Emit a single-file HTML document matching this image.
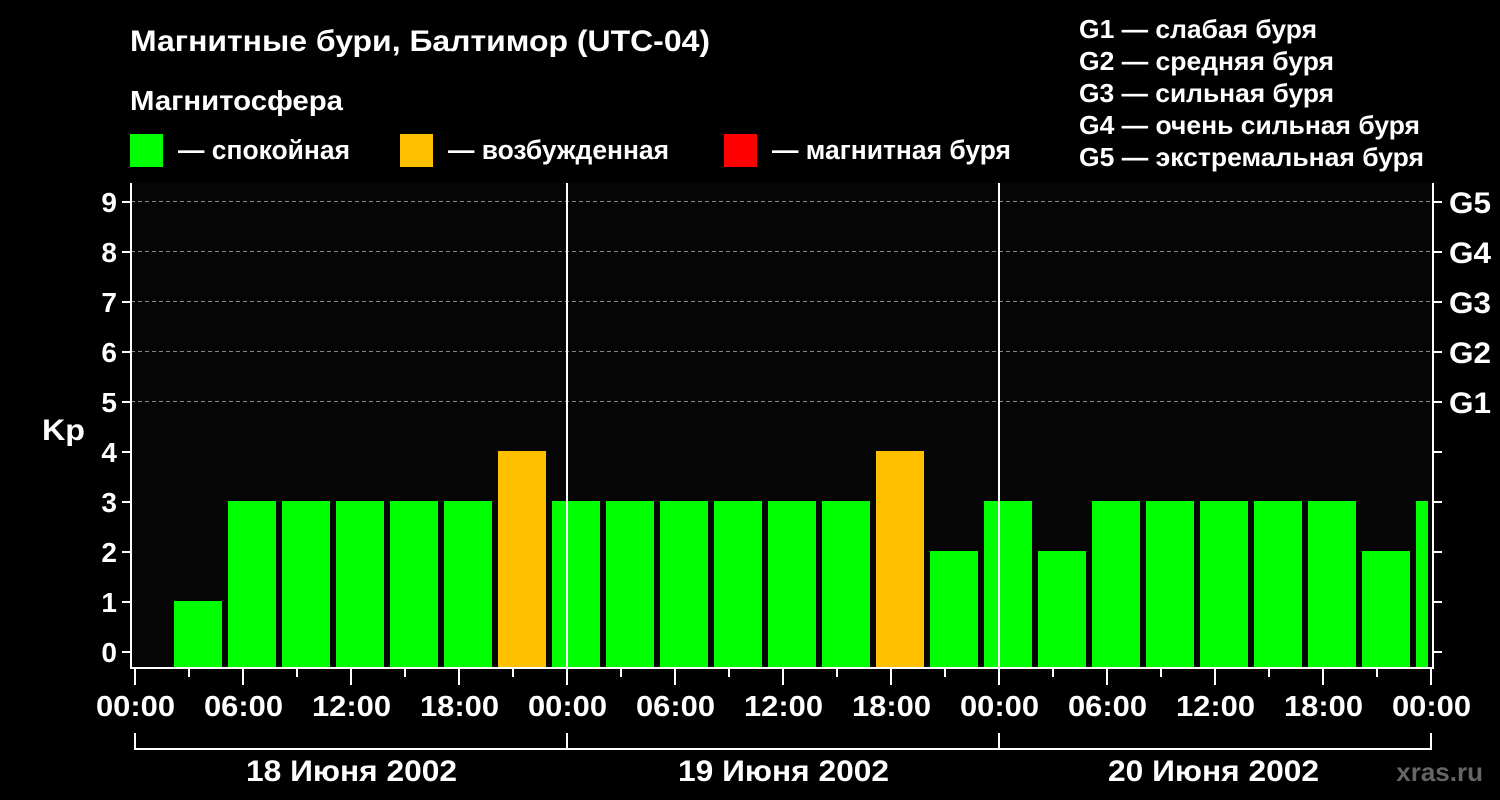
<!DOCTYPE html>
<html><head><meta charset="utf-8"><style>
html,body{margin:0;padding:0;background:#000;width:1500px;height:800px;overflow:hidden}
svg{display:block}
text{font-family:"Liberation Sans",sans-serif;font-weight:bold;fill:#fff}
</style></head><body>
<svg width="1500" height="800" xmlns="http://www.w3.org/2000/svg">
<rect width="1500" height="800" fill="#000"/>
<text x="130" y="51" font-size="30" textLength="580" lengthAdjust="spacingAndGlyphs">Магнитные бури, Балтимор (UTC-04)</text>
<text x="130" y="110" font-size="28" textLength="213" lengthAdjust="spacingAndGlyphs">Магнитосфера</text>
<rect x="130" y="134" width="33" height="33" fill="#00ff00"/>
<text x="178" y="159" font-size="27" textLength="172" lengthAdjust="spacingAndGlyphs">— спокойная</text>
<rect x="400" y="134" width="33" height="33" fill="#ffc000"/>
<text x="448" y="159" font-size="27" textLength="221" lengthAdjust="spacingAndGlyphs">— возбужденная</text>
<rect x="724" y="134" width="33" height="33" fill="#ff0000"/>
<text x="772" y="159" font-size="27" textLength="239" lengthAdjust="spacingAndGlyphs">— магнитная буря</text>
<g font-size="26">
<text x="1079" y="38" textLength="238" lengthAdjust="spacingAndGlyphs">G1 — слабая буря</text>
<text x="1079" y="70" textLength="255" lengthAdjust="spacingAndGlyphs">G2 — средняя буря</text>
<text x="1079" y="102" textLength="255" lengthAdjust="spacingAndGlyphs">G3 — сильная буря</text>
<text x="1079" y="134" textLength="341" lengthAdjust="spacingAndGlyphs">G4 — очень сильная буря</text>
<text x="1079" y="166" textLength="345" lengthAdjust="spacingAndGlyphs">G5 — экстремальная буря</text>
</g>
<rect x="131" y="183" width="1302" height="485" fill="#050505"/>
<g stroke="#888" stroke-dasharray="4,3" stroke-width="1">
<line x1="131" y1="201.5" x2="1432" y2="201.5"/>
<line x1="131" y1="251.5" x2="1432" y2="251.5"/>
<line x1="131" y1="301.5" x2="1432" y2="301.5"/>
<line x1="131" y1="351.5" x2="1432" y2="351.5"/>
<line x1="131" y1="401.5" x2="1432" y2="401.5"/>
</g>
<g>
<rect x="174" y="601" width="48" height="67" fill="#00ff00"/>
<rect x="228" y="501" width="48" height="167" fill="#00ff00"/>
<rect x="282" y="501" width="48" height="167" fill="#00ff00"/>
<rect x="336" y="501" width="48" height="167" fill="#00ff00"/>
<rect x="390" y="501" width="48" height="167" fill="#00ff00"/>
<rect x="444" y="501" width="48" height="167" fill="#00ff00"/>
<rect x="498" y="451" width="48" height="217" fill="#ffc000"/>
<rect x="552" y="501" width="48" height="167" fill="#00ff00"/>
<rect x="606" y="501" width="48" height="167" fill="#00ff00"/>
<rect x="660" y="501" width="48" height="167" fill="#00ff00"/>
<rect x="714" y="501" width="48" height="167" fill="#00ff00"/>
<rect x="768" y="501" width="48" height="167" fill="#00ff00"/>
<rect x="822" y="501" width="48" height="167" fill="#00ff00"/>
<rect x="876" y="451" width="48" height="217" fill="#ffc000"/>
<rect x="930" y="551" width="48" height="117" fill="#00ff00"/>
<rect x="984" y="501" width="48" height="167" fill="#00ff00"/>
<rect x="1038" y="551" width="48" height="117" fill="#00ff00"/>
<rect x="1092" y="501" width="48" height="167" fill="#00ff00"/>
<rect x="1146" y="501" width="48" height="167" fill="#00ff00"/>
<rect x="1200" y="501" width="48" height="167" fill="#00ff00"/>
<rect x="1254" y="501" width="48" height="167" fill="#00ff00"/>
<rect x="1308" y="501" width="48" height="167" fill="#00ff00"/>
<rect x="1362" y="551" width="48" height="117" fill="#00ff00"/>
<rect x="1416" y="501" width="12" height="167" fill="#00ff00"/>
</g>
<g stroke="#fff" stroke-width="2" fill="none">
<polyline points="131,183 131,668 1433,668 1433,183"/>
<line x1="567" y1="183" x2="567" y2="668"/>
<line x1="999" y1="183" x2="999" y2="668"/>
<polyline points="135,733 135,749 1431,749 1431,733"/>
<line x1="567" y1="733" x2="567" y2="749"/>
<line x1="999" y1="733" x2="999" y2="749"/>
</g>
<g stroke="#fff" stroke-width="2">
<line x1="122" y1="652" x2="131" y2="652"/><line x1="122" y1="602" x2="131" y2="602"/>
<line x1="122" y1="552" x2="131" y2="552"/><line x1="122" y1="502" x2="131" y2="502"/>
<line x1="122" y1="452" x2="131" y2="452"/><line x1="122" y1="402" x2="131" y2="402"/>
<line x1="122" y1="352" x2="131" y2="352"/><line x1="122" y1="302" x2="131" y2="302"/>
<line x1="122" y1="252" x2="131" y2="252"/><line x1="122" y1="202" x2="131" y2="202"/>
<line x1="1433" y1="652" x2="1442" y2="652"/><line x1="1433" y1="602" x2="1442" y2="602"/>
<line x1="1433" y1="552" x2="1442" y2="552"/><line x1="1433" y1="502" x2="1442" y2="502"/>
<line x1="1433" y1="452" x2="1442" y2="452"/><line x1="1433" y1="402" x2="1442" y2="402"/>
<line x1="1433" y1="352" x2="1442" y2="352"/><line x1="1433" y1="302" x2="1442" y2="302"/>
<line x1="1433" y1="252" x2="1442" y2="252"/><line x1="1433" y1="202" x2="1442" y2="202"/>
</g>
<g font-size="28" text-anchor="end">
<text x="117" y="662">0</text><text x="117" y="612">1</text><text x="117" y="562">2</text>
<text x="117" y="512">3</text><text x="117" y="462">4</text><text x="117" y="412">5</text>
<text x="117" y="362">6</text><text x="117" y="312">7</text><text x="117" y="262">8</text>
<text x="117" y="212">9</text>
</g>
<text x="42" y="440" font-size="30" textLength="43" lengthAdjust="spacingAndGlyphs">Kp</text>
<g font-size="30">
<text x="1449" y="213" textLength="42" lengthAdjust="spacingAndGlyphs">G5</text><text x="1449" y="263" textLength="42" lengthAdjust="spacingAndGlyphs">G4</text><text x="1449" y="313" textLength="42" lengthAdjust="spacingAndGlyphs">G3</text>
<text x="1449" y="363" textLength="42" lengthAdjust="spacingAndGlyphs">G2</text><text x="1449" y="413" textLength="42" lengthAdjust="spacingAndGlyphs">G1</text>
</g>
<g font-size="29">
<text x="96" y="716" textLength="79" lengthAdjust="spacingAndGlyphs">00:00</text><text x="204" y="716" textLength="79" lengthAdjust="spacingAndGlyphs">06:00</text><text x="312" y="716" textLength="79" lengthAdjust="spacingAndGlyphs">12:00</text>
<text x="420" y="716" textLength="79" lengthAdjust="spacingAndGlyphs">18:00</text><text x="528" y="716" textLength="79" lengthAdjust="spacingAndGlyphs">00:00</text><text x="636" y="716" textLength="79" lengthAdjust="spacingAndGlyphs">06:00</text>
<text x="744" y="716" textLength="79" lengthAdjust="spacingAndGlyphs">12:00</text><text x="852" y="716" textLength="79" lengthAdjust="spacingAndGlyphs">18:00</text><text x="960" y="716" textLength="79" lengthAdjust="spacingAndGlyphs">00:00</text>
<text x="1068" y="716" textLength="79" lengthAdjust="spacingAndGlyphs">06:00</text><text x="1176" y="716" textLength="79" lengthAdjust="spacingAndGlyphs">12:00</text><text x="1284" y="716" textLength="79" lengthAdjust="spacingAndGlyphs">18:00</text>
<text x="1392" y="716" textLength="79" lengthAdjust="spacingAndGlyphs">00:00</text>
</g>
<g font-size="30">
<text x="246" y="781" textLength="211" lengthAdjust="spacingAndGlyphs">18 Июня 2002</text>
<text x="678" y="781" textLength="211" lengthAdjust="spacingAndGlyphs">19 Июня 2002</text>
<text x="1108" y="781" textLength="211" lengthAdjust="spacingAndGlyphs">20 Июня 2002</text>
</g>
<text x="1483" y="781" font-size="26" text-anchor="end" style="fill:#666">xras.ru</text>
<g stroke="#fff" stroke-width="2">
<line x1="135" y1="669" x2="135" y2="685"/><line x1="189" y1="669" x2="189" y2="677"/>
<line x1="243" y1="669" x2="243" y2="685"/><line x1="297" y1="669" x2="297" y2="677"/>
<line x1="351" y1="669" x2="351" y2="685"/><line x1="405" y1="669" x2="405" y2="677"/>
<line x1="459" y1="669" x2="459" y2="685"/><line x1="513" y1="669" x2="513" y2="677"/>
<line x1="567" y1="669" x2="567" y2="685"/><line x1="621" y1="669" x2="621" y2="677"/>
<line x1="675" y1="669" x2="675" y2="685"/><line x1="729" y1="669" x2="729" y2="677"/>
<line x1="783" y1="669" x2="783" y2="685"/><line x1="837" y1="669" x2="837" y2="677"/>
<line x1="891" y1="669" x2="891" y2="685"/><line x1="945" y1="669" x2="945" y2="677"/>
<line x1="999" y1="669" x2="999" y2="685"/><line x1="1053" y1="669" x2="1053" y2="677"/>
<line x1="1107" y1="669" x2="1107" y2="685"/><line x1="1161" y1="669" x2="1161" y2="677"/>
<line x1="1215" y1="669" x2="1215" y2="685"/><line x1="1269" y1="669" x2="1269" y2="677"/>
<line x1="1323" y1="669" x2="1323" y2="685"/><line x1="1377" y1="669" x2="1377" y2="677"/>
<line x1="1431" y1="669" x2="1431" y2="685"/>
</g>
</svg>
</body></html>
